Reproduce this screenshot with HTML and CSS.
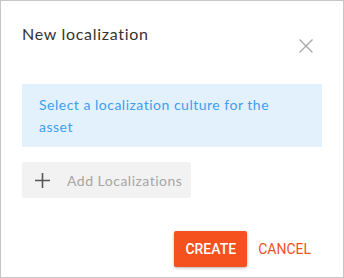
FILE: index.html
```html
<!DOCTYPE html>
<html lang="en">
  <head>
    <meta charset="UTF-8" />
    <meta name="viewport" content="width=device-width, initial-scale=1.0" />
    <title>New localization</title>
    <link rel="stylesheet" href="styles.css">
  </head>
  <body>
    <!-- Dialogo de nueva localización -->
    <div class="dialog">
      <div class="dialog-header">
        <h2>New localization</h2>
        <button class="close" aria-label="Close">
          <svg width="14" height="14" viewBox="0 0 14 14">
            <path d="M0.5 0.5 L13.5 13.5 M13.5 0.5 L0.5 13.5" stroke="#a9a9a9" stroke-width="1.4" fill="none" />
          </svg>
        </button>
      </div>

      <div class="info">Select a localization culture for the asset</div>

      <button class="add-btn">
        <svg width="15" height="15" viewBox="0 0 15 15">
          <path d="M7.5 0 V15 M0 7.5 H15" stroke="#555" stroke-width="1.6" fill="none" />
        </svg>
        <span>Add Localizations</span>
      </button>

      <div class="actions">
        <button class="btn-create">CREATE</button>
        <button class="btn-cancel">CANCEL</button>
      </div>
    </div>
  </body>
</html>
```

FILE: styles.css
```css
/* Base */
body {
  margin: 0;
  font-family: 'Lato', 'Open Sans', sans-serif;
  background: #fff;
}

.dialog {
  width: 344px;
  height: 278px;
  box-sizing: border-box;
  border: 1px solid #c6c6c6;
  padding: 21px 21px 0 21px;
  background: #fff;
}

/* Cabecera */
.dialog-header {
  display: flex;
  justify-content: space-between;
  align-items: flex-start;
  height: 62px;
}

.dialog-header h2 {
  margin: 0;
  font-size: 16px;
  font-weight: 400;
  line-height: 24px;
  color: #333;
  letter-spacing: 0.7px;
}

.close {
  background: none;
  border: none;
  padding: 0;
  margin: 17px 9px 0 0;
  cursor: pointer;
  display: flex;
}

/* Mensaje */
.info {
  background: #e3f1fd;
  color: #3d9ff0;
  font-size: 14px;
  line-height: 22px;
  padding: 10px 40px 9px 17px;
  letter-spacing: 0.5px;
}

/* Botón añadir */
.add-btn {
  display: flex;
  align-items: center;
  gap: 17px;
  margin-top: 15px;
  width: 169px;
  height: 36px;
  padding: 0 0 0 13px;
  border: none;
  border-radius: 2px;
  background: #f2f2f2;
  font-family: 'Lato', 'Open Sans', sans-serif;
  font-size: 14px;
  color: #a6a6a6;
  cursor: pointer;
  letter-spacing: 0.5px;
}

/* Acciones */
.actions {
  display: flex;
  justify-content: flex-end;
  margin-top: 33px;
}

.actions button {
  height: 36px;
  border: none;
  border-radius: 2px;
  font-family: 'Roboto', sans-serif;
  font-size: 14px;
  padding: 0 11px;
  cursor: pointer;
}

.btn-create {
  background: #f4511e;
  color: #fff;
  font-weight: 500;
  box-shadow: 0 1px 3px rgba(0, 0, 0, 0.3);
}

.btn-cancel {
  background: none;
  color: #f4511e;
  font-weight: 400;
  padding: 0 10px 0 10px;
}
```
